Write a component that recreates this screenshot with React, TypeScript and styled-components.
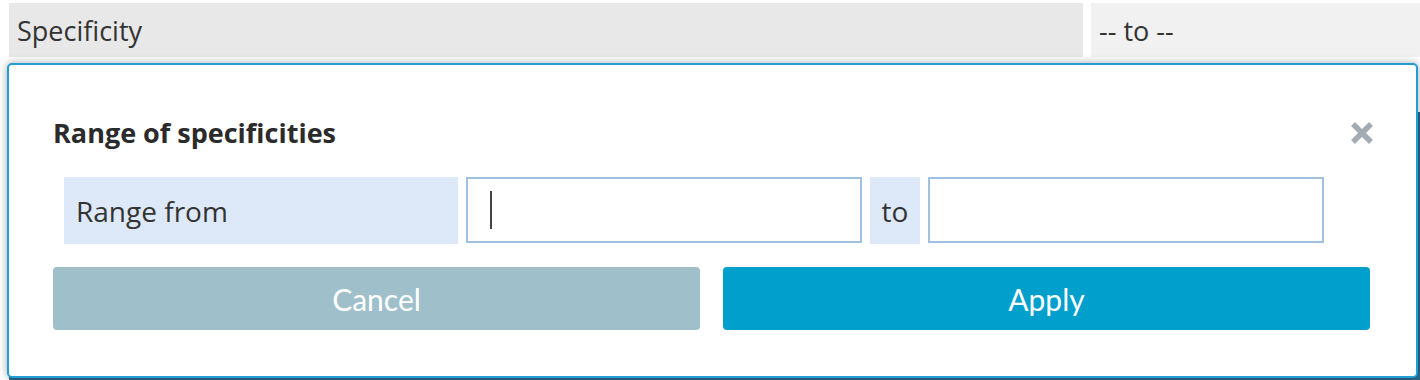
import React from 'react';
import styled, { createGlobalStyle } from 'styled-components';

const GlobalStyle = createGlobalStyle`
    html, body {
        margin: 0;
        padding: 0;
        background: #ffffff;
    }
    * {
        box-sizing: border-box;
    }
`;

const PageDiv = styled.div`
    position: relative;
    width: 1420px;
    height: 380px;
    overflow: hidden;
    font-family: "Open Sans", "Noto Sans", sans-serif;
    color: #333333;
`;

const FilterRowDiv = styled.div`
    display: flex;
    gap: 8px;
    padding: 3px 0 0 9px;
`;

const FilterCellDiv = styled.div<{ $width?: number; $shade: string }>`
    ${p => p.$width ? `width: ${p.$width}px;` : 'flex: 1;'}
    height: 54px;
    background: ${p => p.$shade};
    display: flex;
    align-items: center;
    padding-left: 8px;
    font-size: 27px;
`;

const TableHeadDiv = styled.div`
    margin: 55px 0 0 9px;
    height: 270px;
    background: #2d6b87;
`;

const ModalDiv = styled.div`
    position: absolute;
    left: 7px;
    top: 63px;
    width: 1411px;
    height: 315px;
    background: #ffffff;
    border: 2px solid #1f9fd6;
    border-radius: 5px;
    box-shadow: 0 0 8px rgba(0, 0, 0, 0.35);
    padding: 51px 46px 0 44px;
    display: flex;
    flex-direction: column;
`;

const HeaderDiv = styled.div`
    display: flex;
    justify-content: space-between;
    align-items: center;
    margin-right: -5px;
`;

const TitleH3 = styled.h3`
    margin: 0;
    font-size: 27px;
    line-height: 34px;
    font-weight: 700;
    color: #2b2b2b;
`;

const CloseButton = styled.button`
    width: 26px;
    height: 26px;
    padding: 0;
    border: none;
    background: none;
    display: flex;
    align-items: center;
    justify-content: center;
    cursor: pointer;
`;

const RangeRowDiv = styled.div`
    display: flex;
    gap: 8px;
    margin: 27px 0 0 11px;
    width: 1260px;
    height: 67px;
`;

const RangeLabelDiv = styled.div<{ $width: number; $center?: boolean }>`
    width: ${p => p.$width}px;
    background: #dde9f8;
    display: flex;
    align-items: center;
    justify-content: ${p => p.$center ? 'center' : 'flex-start'};
    padding-left: ${p => p.$center ? 0 : 12}px;
    font-size: 28px;
`;

const InputWrapDiv = styled.div<{ $caret?: boolean }>`
    position: relative;
    width: 396px;
    height: 66px;

    ${p => p.$caret && `
        &::after {
            content: '';
            position: absolute;
            left: 24px;
            top: 14px;
            width: 2px;
            height: 38px;
            background: #444444;
        }
    `}
`;

const RangeInput = styled.input`
    width: 100%;
    height: 100%;
    border: 2px solid #9fc0e0;
    background: #ffffff;
    padding: 0 24px;
    font-family: inherit;
    font-size: 28px;
    color: #333333;
    outline: none;
    caret-color: transparent;
`;

const ButtonRowDiv = styled.div`
    display: flex;
    gap: 23px;
    margin-top: 23px;
`;

const ActionButton = styled.button<{ $primary?: boolean }>`
    flex: 1;
    height: 63px;
    border: none;
    border-radius: 4px;
    background: ${p => p.$primary ? '#009fcc' : '#9fbfcb'};
    color: #ffffff;
    font-family: Lato, "Open Sans", sans-serif;
    font-size: 30px;
    cursor: pointer;
`;

const App = () => {
    return (
        <>
            <GlobalStyle />
            <PageDiv>
                <FilterRowDiv>
                    <FilterCellDiv $width={1074} $shade="#e8e8e8">Specificity</FilterCellDiv>
                    <FilterCellDiv $shade="#f1f1f1">-- to --</FilterCellDiv>
                </FilterRowDiv>
                <TableHeadDiv />
                <ModalDiv>
                    <HeaderDiv>
                        <TitleH3>Range of specificities</TitleH3>
                        <CloseButton aria-label="Close">
                            <svg width="24" height="24" viewBox="0 0 24 24">
                                <path d="M3 3 L21 21 M21 3 L3 21" stroke="#a3abb3" strokeWidth="5.5" />
                            </svg>
                        </CloseButton>
                    </HeaderDiv>
                    <RangeRowDiv>
                        <RangeLabelDiv $width={394}>Range from</RangeLabelDiv>
                        <InputWrapDiv $caret>
                            <RangeInput />
                        </InputWrapDiv>
                        <RangeLabelDiv $width={50} $center>to</RangeLabelDiv>
                        <InputWrapDiv>
                            <RangeInput />
                        </InputWrapDiv>
                    </RangeRowDiv>
                    <ButtonRowDiv>
                        <ActionButton>Cancel</ActionButton>
                        <ActionButton $primary>Apply</ActionButton>
                    </ButtonRowDiv>
                </ModalDiv>
            </PageDiv>
        </>
    );
}

export default App;
